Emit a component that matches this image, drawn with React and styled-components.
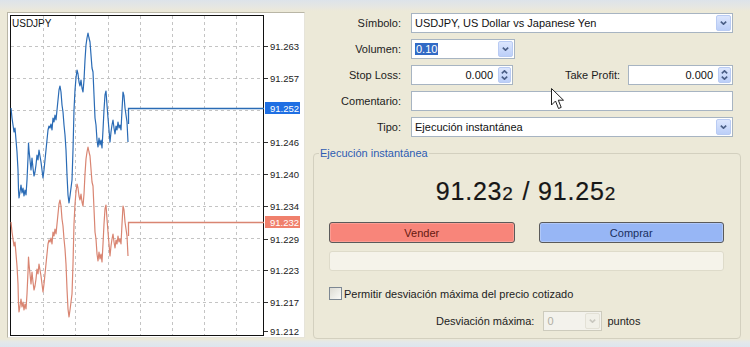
import React from 'react';
import styled, { createGlobalStyle } from 'styled-components';

const Global = createGlobalStyle`
  html, body { margin: 0; padding: 0; }
  body {
    width: 750px; height: 347px; overflow: hidden;
    background: #ece9d8;
    font-family: "Liberation Sans", Arial, sans-serif;
  }
`;

const Window = styled.div`
  position: relative;
  width: 750px;
  height: 347px;
  box-sizing: border-box;
  padding: 12px 9px 0 7px;
  display: flex;
  gap: 8px;
  background: linear-gradient(#dde3ea 0px, #e6e7e2 7px, #ece9d8 11px, #ece9d8 339px, #e4e8ea 342px, #dde5ee 347px);
`;

const ChartPanel = styled.div`
  flex: none;
  width: 298px;
  height: 326px;
  box-sizing: border-box;
  background: #fff;
  border: 1px solid #b9b6a6;
  border-right-color: #e6e4da;
  border-bottom-color: #e6e4da;
  svg { display: block; }
`;

const Form = styled.div`
  flex: 1;
  min-width: 0;
  display: flex;
  flex-direction: column;
  padding: 1px 0 8px 0;
`;

const Row = styled.div`
  display: flex;
  align-items: center;
  height: 20px;
  margin-bottom: 6px;
  padding-right: 8px;
`;

const Label = styled.label`
  flex: ${p => (p.$grow ? '1' : 'none')};
  width: ${p => (p.$grow ? 'auto' : '88px')};
  margin-right: ${p => (p.$grow ? 8 : 10)}px;
  text-align: right;
  font-size: 11px;
  color: #1c1c1c;
  white-space: nowrap;
`;

const Field = styled.div`
  flex: ${p => (p.$w ? 'none' : '1')};
  width: ${p => (p.$w ? `${p.$w}px` : 'auto')};
  height: 20px;
  box-sizing: border-box;
  display: flex;
  align-items: center;
  border: 1px solid ${p => (p.$disabled ? '#cdcbbd' : '#a7b4c2')};
  background: ${p => (p.$disabled ? '#f3f2ec' : '#fff')};
  padding: 0 1px 0 3px;
  font-size: 11px;
  color: ${p => (p.$disabled ? '#b1afa3' : '#111')};
`;

const Value = styled.span`
  flex: 1;
  min-width: 0;
  text-align: ${p => (p.$right ? 'right' : 'left')};
  padding-right: ${p => (p.$right ? 5 : 0)}px;
  white-space: nowrap;
  overflow: hidden;
`;

const Selected = styled.span`
  background: #316ac5;
  color: #fff;
  padding: 1px 1px;
`;

const SideButton = styled.span`
  flex: none;
  width: ${p => (p.$spin ? 13 : 15)}px;
  height: 16px;
  box-sizing: border-box;
  display: flex;
  flex-direction: column;
  align-items: center;
  justify-content: center;
  gap: 2px;
  border-radius: 2px;
  border: 1px solid ${p => (p.$disabled ? '#e3e1d6' : '#b9cbf3')};
  background: ${p => (p.$disabled ? '#f1f0e8' : 'linear-gradient(#dce6fd, #bccff8)')};
  svg { display: block; }
`;

const Group = styled.fieldset`
  flex: 1;
  min-width: 0;
  margin: 3px 0 0 0;
  padding: 0;
  box-sizing: border-box;
  border: 1px solid #d3d0bf;
  border-radius: 4px;
`;

const Legend = styled.legend`
  margin-left: 5px;
  padding: 0 1px;
  font-size: 11px;
  line-height: 14px;
  color: #2e5cb2;
`;

const GroupBody = styled.div`
  display: flex;
  flex-direction: column;
  padding: 17px 16px 0 15px;
`;

const Price = styled.div`
  text-align: center;
  font-size: 25px;
  line-height: 28px;
  letter-spacing: 0.8px;
  color: #161616;
  -webkit-text-stroke: 0.2px #161616;
`;

const Pip = styled.span`
  font-size: 19px;
  letter-spacing: 2px;
`;

const Buttons = styled.div`
  margin-top: 14px;
  display: grid;
  grid-template-columns: 1fr 1fr;
  gap: 24px;
`;

const TradeButton = styled.button`
  height: 21px;
  box-sizing: border-box;
  border: 1px solid #5a5a5a;
  border-radius: 3px;
  font-family: inherit;
  font-size: 11px;
  padding: 0;
  background: ${p => (p.$sell ? '#f8857a' : '#97b6f5')};
  color: ${p => (p.$sell ? '#641810' : '#1a2f5e')};
  box-shadow: inset 0 0 0 1px ${p => (p.$sell ? '#fb9d93' : '#b0c8f8')};
`;

const Progress = styled.div`
  margin-top: 8px;
  height: 20px;
  box-sizing: border-box;
  border: 1px solid #dedbca;
  border-radius: 3px;
  background: #f5f3ea;
`;

const CheckRow = styled.label`
  margin-top: 15px;
  height: 15px;
  display: flex;
  align-items: center;
  gap: 2px;
  font-size: 11px;
  color: #1c1c1c;
`;

const CheckBox = styled.span`
  flex: none;
  width: 13px;
  height: 13px;
  box-sizing: border-box;
  border: 1px solid #7d8893;
  background: linear-gradient(135deg, #dcdbd3, #fbfbf8);
`;

const DevRow = styled.div`
  margin-top: 10px;
  margin-left: 107px;
  height: 20px;
  display: flex;
  align-items: center;
  font-size: 11px;
  color: #1c1c1c;
`;

const DevLabel = styled.span`
  margin-right: 9px;
`;

const Units = styled.span`
  margin-left: 5px;
`;

const Pointer = styled.svg`
  position: absolute;
  left: 551px;
  top: 88px;
`;

const Chevron = ({ up, color = '#4b5f86' }) => (
  <svg width="7" height="4" viewBox="0 0 7 4">
    <path d={up ? 'M0.8 3.4 L3.5 0.8 L6.2 3.4' : 'M0.8 0.6 L3.5 3.2 L6.2 0.6'} fill="none" stroke={color} strokeWidth="1.6" />
  </svg>
);

const DropButton = ({ disabled }) => (
  <SideButton $disabled={disabled}>
    <Chevron color={disabled ? '#c9c8c0' : '#4b5f86'} />
  </SideButton>
);

const SpinButton = () => (
  <SideButton $spin>
    <Chevron up />
    <Chevron />
  </SideButton>
);

const bluePts = [
  [11,108],[12,118],[13,125],[14,132],[15,128],[16,140],[17,152],[18,170],[18.5,190],[19,198],[20,192],[21,185],[22,193],[23,188],[24,196],[25,190],[26,195],[27,180],[28,158],[28.5,143],[29,150],[30,160],[31,170],[32,158],[33,168],[34,176],[35,172],[36,165],[37,155],[38,160],[39,150],[40,156],[41,162],[42,170],[43,178],[44,170],[45,160],[46,150],[47,140],[48,130],[49,126],[50,128],[51,124],[52,130],[53,118],[54,122],[55,115],[56,120],[57,110],[58,100],[59,90],[60,86],[61,92],[62,105],[63,112],[64,125],[65,135],[66,150],[67,175],[68,195],[69,203],[70,196],[71,188],[72,180],[73,150],[74,110],[75,90],[76,78],[77,70],[78,74],[79,82],[80,86],[81,80],[82,88],[83,92],[84,80],[85,60],[86,45],[87,38],[88,33],[89,38],[90,42],[91,55],[92,68],[93,72],[94,95],[95,118],[96,125],[97,140],[98,147],[99,138],[100,145],[101,140],[102,148],[103,130],[104,110],[105,95],[106,91],[107,105],[108,118],[109,130],[110,142],[111,132],[112,125],[113,120],[114,128],[115,134],[116,126],[117,130],[118,122],[119,128],[120,125],[121,130],[122,110],[123,92],[124,96],[125,108],[126,115],[127,122],[128,142]
];

const toPath = (pts, dy) => pts.map(([x, y], i) => `${i ? 'L' : 'M'}${x} ${y + dy}`).join(' ');

const axis = [
  ['91.263', 46], ['91.257', 78], ['91.246', 142], ['91.240', 174], ['91.234', 206],
  ['91.229', 239], ['91.223', 270], ['91.217', 302], ['91.212', 331],
];
const hGrid = [46.5, 78.5, 110.5, 142.5, 174.5, 206.5, 238.5, 270.5, 302.5];
const vGrid = [43.5, 75.5, 108.5, 140.5, 172.5, 204.5, 236.5];

const Chart = () => (
  <svg width="296" height="324" viewBox="0 0 296 324" fontFamily="'Liberation Sans', Arial, sans-serif">
    <g transform="translate(-8,-13)">
      {hGrid.map(y => (
        <line key={y} x1="11" x2="263" y1={y} y2={y} stroke="#c4c4c4" strokeDasharray="3 3" />
      ))}
      {vGrid.map(x => (
        <line key={x} x1={x} x2={x} y1="16" y2="335" stroke="#c4c4c4" strokeDasharray="3 3" />
      ))}
      <rect x="10.5" y="15.5" width="253" height="320" fill="none" stroke="#111" />
      <text x="12" y="27" fontSize="10" fill="#111">USDJPY</text>

      <path d={toPath(bluePts, 114)} fill="none" stroke="#d98572" strokeWidth="1.2" strokeLinejoin="round" />
      <path d="M128.5 236 L128.5 222.5 L264 222.5" fill="none" stroke="#d98572" strokeWidth="1.3" />
      <path d={toPath(bluePts, 0)} fill="none" stroke="#2a6bb5" strokeWidth="1.2" strokeLinejoin="round" />
      <path d="M128.5 124 L128.5 108.5 L264 108.5" fill="none" stroke="#2a6bb5" strokeWidth="1.3" />

      {axis.map(([t, y]) => (
        <g key={t}>
          <line x1="264" x2="268" y1={y + 0.5} y2={y + 0.5} stroke="#333" />
          <text x="270" y={y + 3.5} fontSize="9.5" fill="#222">{t}</text>
        </g>
      ))}
      <rect x="265" y="102" width="35" height="12" fill="#1f6fe3" />
      <text x="270" y="111.5" fontSize="9.5" fill="#fff">91.252</text>
      <rect x="265" y="216" width="35" height="12" fill="#f0806c" />
      <text x="270" y="225.5" fontSize="9.5" fill="#fff">91.232</text>
    </g>
  </svg>
);

export default function App() {
  return (
    <>
      <Global />
      <Window>
        <ChartPanel>
          <Chart />
        </ChartPanel>
        <Form>
          <Row>
            <Label>Símbolo:</Label>
            <Field>
              <Value>USDJPY, US Dollar vs Japanese Yen</Value>
              <DropButton />
            </Field>
          </Row>
          <Row>
            <Label>Volumen:</Label>
            <Field $w={104}>
              <Value><Selected>0.10</Selected></Value>
              <DropButton />
            </Field>
          </Row>
          <Row>
            <Label>Stop Loss:</Label>
            <Field $w={102}>
              <Value $right>0.000</Value>
              <SpinButton />
            </Field>
            <Label $grow>Take Profit:</Label>
            <Field $w={105}>
              <Value $right>0.000</Value>
              <SpinButton />
            </Field>
          </Row>
          <Row>
            <Label>Comentario:</Label>
            <Field />
          </Row>
          <Row>
            <Label>Tipo:</Label>
            <Field>
              <Value>Ejecución instantánea</Value>
              <DropButton />
            </Field>
          </Row>
          <Group>
            <Legend>Ejecución instantánea</Legend>
            <GroupBody>
              <Price>91.23<Pip>2</Pip> / 91.25<Pip>2</Pip></Price>
              <Buttons>
                <TradeButton $sell>Vender</TradeButton>
                <TradeButton>Comprar</TradeButton>
              </Buttons>
              <Progress />
              <CheckRow>
                <CheckBox />
                Permitir desviación máxima del precio cotizado
              </CheckRow>
              <DevRow>
                <DevLabel>Desviación máxima:</DevLabel>
                <Field $w={59} $disabled>
                  <Value>0</Value>
                  <DropButton disabled />
                </Field>
                <Units>puntos</Units>
              </DevRow>
            </GroupBody>
          </Group>
        </Form>
        <Pointer width="14" height="22" viewBox="0 0 14 22">
          <path d="M0.5 0.5 L0.5 17 L4.5 13 L7.5 20.5 L10.2 19.4 L7.3 12.2 L12.5 12.2 Z" fill="#fff" stroke="#222" strokeWidth="1" strokeLinejoin="round" />
        </Pointer>
      </Window>
    </>
  );
}
